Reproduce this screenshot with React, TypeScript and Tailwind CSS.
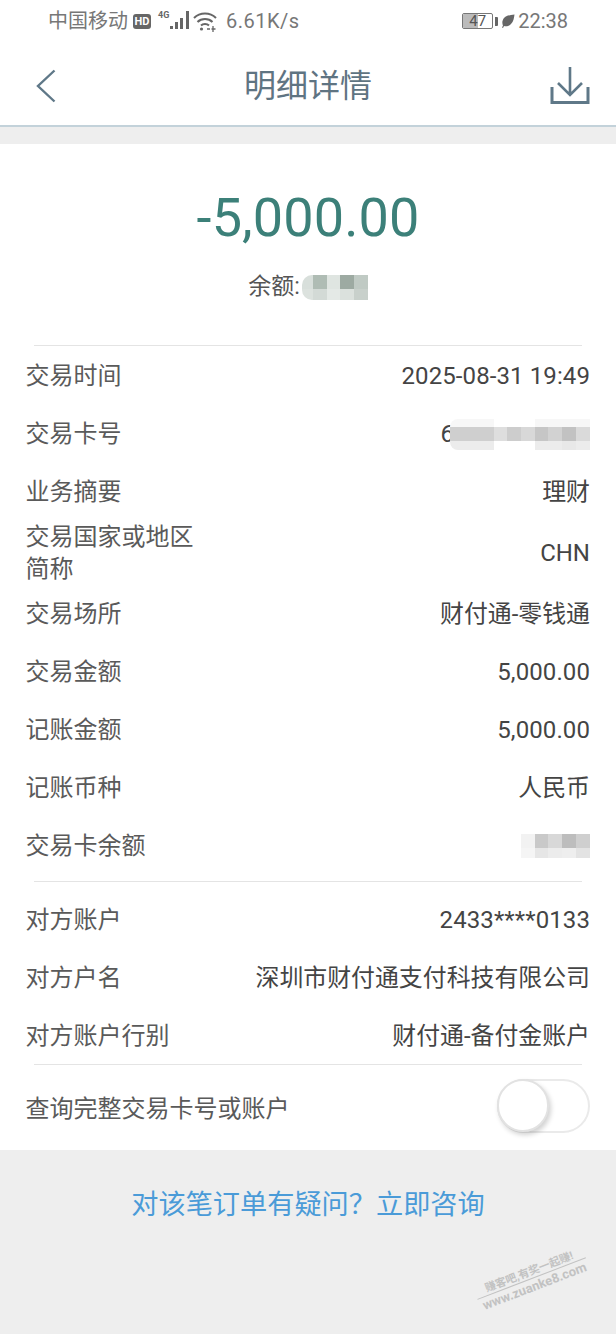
const font = "font-['Roboto','Noto_Sans_CJK_SC',sans-serif]";

function Row({ label, value, latin }: { label: string; value: React.ReactNode; latin?: boolean }) {
  return (
    <div className="flex h-[58px] items-center justify-between px-[26px] pt-[2px] text-[24px] leading-[32px]">
      <span className="-ml-[0.5px] text-[#5a5a5a]">{label}</span>
      <span className={latin ? "tracking-[0.1px] text-[#444]" : "text-[23.9px] text-[#444]"}>{value}</span>
    </div>
  );
}

function Divider() {
  return <div className="mx-[34px] h-px bg-[#e4e4e4]" />;
}

function Mosaic({ rows, cell, heights, className }: { rows: string[][]; cell: number[]; heights: number[]; className?: string }) {
  return (
    <div className={className}>
      {rows.map((row, r) => (
        <div key={r} className="flex" style={{ height: heights[r] }}>
          {row.map((c, i) => (
            <div key={i} style={{ width: cell[i], background: c }} />
          ))}
        </div>
      ))}
    </div>
  );
}

function StatusBar() {
  return (
    <div className="flex h-[46px] items-center justify-between pb-[4px] pl-[48px] pr-[48px] text-[20px] leading-none text-[#777]">
      <div className="flex items-center">
        <span>中国移动</span>
        <span className="ml-[5px] flex h-[15px] w-[18px] items-center justify-center rounded-[3px] bg-[#666] text-[11px] font-bold leading-none text-white">
          HD
        </span>
        <svg width="34" height="24" viewBox="0 0 34 24" className="ml-[4px] text-[#666]" fill="currentColor">
          <text x="3" y="9" fontSize="9" fontWeight="700" fontFamily="Roboto">4G</text>
          <rect x="15" y="17" width="3" height="3" />
          <rect x="20" y="13" width="3" height="7" />
          <rect x="25" y="9" width="3" height="11" />
          <rect x="31" y="2" width="3" height="18" />
        </svg>
        <svg width="26" height="22" viewBox="0 0 26 22" className="ml-[3px]" fill="none" stroke="#666" strokeWidth="2">
          <path d="M2 8c6-6 16-6 22 0" />
          <path d="M5.500 12c4-4 11-4 15 0" />
          <path d="M9 15.500c2-2 6-2 8 0" />
          <circle cx="9.500" cy="19" r="1.600" fill="#666" stroke="none" />
          <path d="M15 19h3M21 16v6M19.500 19h4" strokeWidth="1.300" />
        </svg>
        <span className="ml-[8px] tracking-[0.5px]">6.61K/s</span>
      </div>
      <div className="flex items-center">
        <div className="relative h-[16px] w-[31px] overflow-hidden rounded-[2px] border border-[#777]">
          <div className="h-full w-[15px] bg-[#bbb]" />
          <span className="absolute inset-0 flex items-center justify-center text-[15px] leading-none text-[#555]">47</span>
        </div>
        <div className="ml-[2px] h-[9px] w-[3px] rounded-r-[1px] bg-[#666]" />
        <svg width="14" height="14" viewBox="0 0 14 14" className="ml-[3px]" fill="#666">
          <path d="M13.500 .5C7 1 2.500 2.500 1.500 7c-.4 2 0 3.500.5 4.500L1 13.500l1 .4 1-2c2 .6 5 .4 7-1.900C12.500 7.500 13 4 13.500.5z" />
        </svg>
        <span className="ml-[3px]">22:38</span>
      </div>
    </div>
  );
}

function NavBar() {
  return (
    <div className="flex h-[81px] items-center justify-between border-b-2 border-[#c3d2da]">
      <div className="w-[66px] pl-[36px]">
        <svg width="20" height="34" viewBox="0 0 20 34" fill="none" stroke="#5f7888" strokeWidth="2.400">
          <path d="M18.500 1.500 2 17l16.500 15.500" />
        </svg>
      </div>
      <span className="text-[32px] leading-none text-[#5f7482]">明细详情</span>
      <div className="flex w-[66px] justify-end pr-[26px]">
        <svg width="40" height="38" viewBox="0 0 40 38" fill="none" stroke="#5f7888" strokeWidth="2.600">
          <path d="M20 0v27M8 16l12 12 12-12" />
          <path d="M2 20v15.500h36V20" strokeWidth="3" />
        </svg>
      </div>
    </div>
  );
}

function Toggle() {
  return (
    <div className="relative -mt-[6px] h-[54px] w-[93px] rounded-full border-2 border-[#eaeaea] bg-white">
      <div className="absolute -left-[2px] -top-[2px] h-[53px] w-[52px] rounded-full border-2 border-[#e2e2e2] bg-white shadow-[2px_3px_5px_rgba(0,0,0,0.18)]" />
    </div>
  );
}

export default function App() {
  return (
    <div className={`${font} flex h-[1334px] w-[616px] flex-col overflow-hidden bg-[#eeeeee]`}>
      <div className="bg-white">
        <StatusBar />
        <NavBar />
      </div>

      <div className="mt-[17px] bg-white">
        <div className="flex h-[201px] flex-col items-center">
          <div className="mt-[42px] text-[54px] leading-[64px] tracking-[0.1px] text-[#3c8079]">-5,000.00</div>
          <div className="mt-[21px] flex items-center text-[23px] leading-[32px] text-[#555]">
            <span>余额:</span>
            <Mosaic
              className="ml-[2px] overflow-hidden rounded-l-[10px]"
              cell={[11, 14, 13, 14, 14]}
              heights={[14, 11]}
              rows={[
                ["#d8dfdb", "#afbcb4", "#dfe5e1", "#9daaa2", "#c0cac4"],
                ["#dce2de", "#d3dad6", "#e4e9e6", "#dbe1dd", "#c8d0cb"],
              ]}
            />
          </div>
        </div>
        <Divider />
        <Row latin label="交易时间" value="2025-08-31 19:49" />
        <Row
          latin
          label="交易卡号"
          value={
            <span className="flex items-center">
              <span className="mr-[-4px]">6</span>
              <Mosaic
                className="overflow-hidden rounded-l-[8px]"
                cell={[44, 13, 14, 14, 13, 14, 14, 14]}
                heights={[8, 14, 9]}
                rows={[
                  ["#f7f7f7", "#fff", "#fff", "#fff", "#f7f7f7", "#f7f7f7", "#f7f7f7", "#f7f7f7"],
                  ["#cfcfcf", "#dedede", "#cdcdcd", "#d8d8d8", "#c6c6c6", "#d2d2d2", "#c2c2c2", "#dadada"],
                  ["#ececec", "#fff", "#fff", "#fff", "#ececec", "#ececec", "#e8e8e8", "#ececec"],
                ]}
              />
            </span>
          }
        />
        <Row label="业务摘要" value="理财" />
        <div className="flex h-[64px] items-center justify-between px-[26px] pt-[2px] text-[24px] leading-[32px]">
          <span className="-ml-[0.5px] text-[#5a5a5a]">
            交易国家或地区
            <br />
            简称
          </span>
          <span className="text-[#444]">CHN</span>
        </div>
        <Row label="交易场所" value="财付通-零钱通" />
        <Row latin label="交易金额" value="5,000.00" />
        <Row latin label="记账金额" value="5,000.00" />
        <Row label="记账币种" value="人民币" />
        <Row
          latin
          label="交易卡余额"
          value={
            <Mosaic
              cell={[14, 13, 14, 14, 14]}
              heights={[14, 10]}
              rows={[
                ["#f2f2f2", "#c9c9c9", "#d8d8d8", "#bdbdbd", "#cfcfcf"],
                ["#f5f5f5", "#e6e6e6", "#ececec", "#eeeeee", "#e3e3e3"],
              ]}
            />
          }
        />
        <div className="mt-[7px]" />
        <Divider />
        <div className="mt-[8px]" />
        <Row latin label="对方账户" value="2433****0133" />
        <Row label="对方户名" value="深圳市财付通支付科技有限公司" />
        <Row label="对方账户行别" value="财付通-备付金账户" />
        <Divider />
        <div className="flex h-[85px] items-center justify-between px-[26px] pt-[2px] text-[24px] leading-[32px]">
          <span className="-ml-[0.5px] text-[#5a5a5a]">查询完整交易卡号或账户</span>
          <Toggle />
        </div>
      </div>

      <div className="relative flex-1">
        <div className="mt-[36px] text-center text-[27.2px] leading-[38px] text-[#4a9bd8]">{"对该笔订单有疑问\uFF1F立即咨询"}</div>
        {/* watermark */}
        <div className="absolute left-[474px] top-[114px] w-[116px] -rotate-[21deg] whitespace-nowrap text-center text-[11px] font-bold leading-[15px] text-[#c2c2c2]">
          赚客吧,有奖一起赚!
          <br />
          <span className="text-[13px]">www.zuanke8.com</span>
          <div className="absolute left-0 right-0 top-[14px] h-px bg-[#c2c2c2]" />
        </div>
      </div>
    </div>
  );
}
